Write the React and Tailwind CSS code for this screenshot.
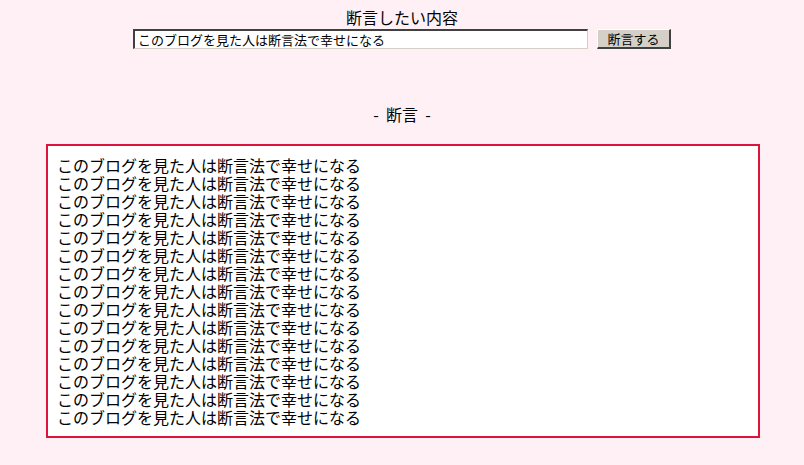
export default function App() {
  const line = "このブログを見た人は断言法で幸せになる";
  const lines = Array.from({ length: 15 }, () => line);
  return (
    <div
      className="w-[804px] h-[465px] bg-[#fff0f5] text-black overflow-hidden"
      style={{ fontFamily: '"Noto Sans CJK JP", "Noto Sans", sans-serif' }}
    >
      <div className="flex flex-col items-center pt-[8px]">
        <div className="text-[16px] leading-[18px]">断言したい内容</div>
        <div className="flex items-center mt-[3px] h-[20px]">
          <input
            type="text"
            defaultValue={line}
            className="w-[455px] h-[20px] bg-white px-[3px] text-[13px] leading-[16px] border-t-2 border-l-2 border-b border-r border-t-[#404040] border-l-[#404040] border-b-[#d4d0c8] border-r-[#d4d0c8] outline-none"
            style={{ fontFamily: '"Noto Sans CJK JP", sans-serif' }}
          />
          <button
            className="ml-[9px] w-[74px] h-[20px] bg-[#d4d0c8] text-[13px] leading-[16px] border-t border-l border-b-2 border-r-2 border-t-white border-l-white border-b-[#404040] border-r-[#404040] flex items-center justify-center"
            style={{ fontFamily: '"Noto Sans CJK JP", sans-serif' }}
          >
            断言する
          </button>
        </div>
        <div className="mt-[56px] text-[16px] leading-[18px] whitespace-pre">-  断言  -</div>
        <div className="mt-[21px] ml-[2px] w-[714px] border-2 border-[#dc143c] bg-white pt-[10px] pb-[10px] pl-[9px]">
          {lines.map((l, i) => (
            <div key={i} className="text-[16px] leading-[18px]">
              {l}
            </div>
          ))}
        </div>
      </div>
    </div>
  );
}
